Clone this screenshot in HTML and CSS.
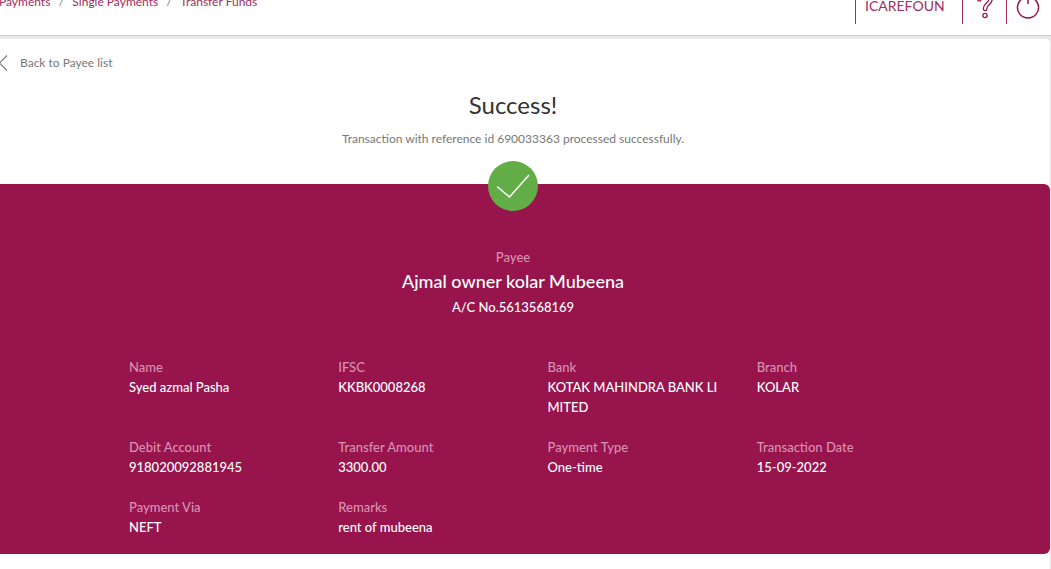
FILE: index.html
```html
<!DOCTYPE html>
<html lang="en">
<head>
<meta charset="utf-8">
<meta name="viewport" content="width=device-width, initial-scale=1">
<title>Transfer Funds</title>
<link rel="stylesheet" href="styles.css">
</head>
<body>
<header class="topbar">
  <nav class="crumbs" aria-label="Breadcrumb">
    <a href="#">Payments</a><span class="sep">/</span><a href="#">Single Payments</a><span class="sep">/</span><a href="#">Transfer Funds</a>
  </nav>
  <div class="tools">
    <a class="user" href="#">ICAREFOUN</a>
    <button class="tool" type="button" aria-label="Help">
      <svg width="18" height="30" viewBox="0 0 18 30" fill="none" stroke="currentColor" stroke-width="1.3"><path d="M1.600 9.400C1.600 4.800 4.600 2.500 9 2.500s7.300 2.800 7.300 6.500c0 5.600-5.500 5.600-5.500 9.500v.5a1.700 1.700 0 0 1-3.400 0v-.7C7.400 13.200 12.900 13 12.900 9c0-2.100-1.500-3.300-3.900-3.300S5.100 7 5 9.400a1.700 1.700 0 0 1-3.400 0z"/><circle cx="9" cy="25.500" r="2.100"/></svg>
    </button>
    <button class="tool" type="button" aria-label="Log out">
      <svg width="24" height="30" viewBox="0 0 24 30" fill="none" stroke="currentColor" stroke-width="1.500"><path d="M8 7.800a10.500 10.500 0 1 0 8 0M12 4v10"/></svg>
    </button>
  </div>
</header>
<main class="panel">
  <a class="back" href="#">
    <svg width="8" height="16" viewBox="0 0 8 16" fill="none" stroke="currentColor" stroke-width="1.200"><path d="M7 .5L-.5 8 7 15.500"/></svg>
    <span>Back to Payee list</span>
  </a>
  <section class="status">
    <h1>Success!</h1>
    <p>Transaction with reference id 690033363 processed successfully.</p>
  </section>
  <section class="receipt">
    <div class="badge">
      <svg width="50" height="50" viewBox="0 0 50 50" fill="none"><circle cx="25" cy="25" r="25" fill="#62ad47"/><path d="M9 25.500L21.500 36 41 14" stroke="#fff" stroke-width="1.600"/></svg>
    </div>
    <div class="payee">
      <p class="label">Payee</p>
      <h2>Ajmal owner kolar Mubeena</h2>
      <p>A/C No.5613568169</p>
    </div>
    <dl class="details">
      <div><dt>Name</dt><dd>Syed azmal Pasha</dd></div>
      <div><dt>IFSC</dt><dd>KKBK0008268</dd></div>
      <div><dt>Bank</dt><dd>KOTAK MAHINDRA BANK LI<br>MITED</dd></div>
      <div><dt>Branch</dt><dd>KOLAR</dd></div>
      <div><dt>Debit Account</dt><dd>918020092881945</dd></div>
      <div><dt>Transfer Amount</dt><dd>3300.00</dd></div>
      <div><dt>Payment Type</dt><dd>One-time</dd></div>
      <div><dt>Transaction Date</dt><dd>15-09-2022</dd></div>
      <div><dt>Payment Via</dt><dd>NEFT</dd></div>
      <div><dt>Remarks</dt><dd>rent of mubeena</dd></div>
    </dl>
  </section>
</main>
</body>
</html>
```
FILE: styles.css
```css
* {
  box-sizing: border-box;
}

html {
  height: 100%;
  overflow: hidden;
}

body {
  display: flex;
  flex-direction: column;
  min-height: 100%;
  margin: 0;
  background: #e8e8e8;
  color: #777;
  font-family: Lato, "Liberation Sans", sans-serif;
  font-size: 12px;
  line-height: 20px;
}

h1, h2, p, dl, dd {
  margin: 0;
}

a {
  color: inherit;
  text-decoration: none;
}

svg {
  display: block;
}

.topbar {
  display: flex;
  justify-content: space-between;
  margin-top: -20px;
  padding-bottom: 11px;
  background: #fff;
  border-bottom: 1px solid #ccc;
  color: #a32c60;
}

.crumbs {
  display: flex;
  margin-left: -1px;
  padding-top: 12px;
}

.sep {
  width: 22px;
  text-align: center;
  color: #777;
}

.tools {
  display: flex;
}

.user,
.tool {
  display: flex;
  height: 44px;
  border: 0;
  border-left: 1px solid #a32c60;
}

.user {
  width: 107px;
  padding: 16px 0 0 9px;
  font-size: 14px;
}

.tool {
  justify-content: center;
  width: 44px;
  padding: 10px 0 0;
  background: none;
  color: #97144d;
}

.tool:last-child {
  width: 45px;
  padding-right: 2px;
}

.panel {
  flex: 1;
  margin: 3px 1px 0 0;
  background: #fff;
  border-top-right-radius: 4px;
}

.back {
  display: flex;
  align-items: center;
  gap: 12px;
  padding-top: 14px;
}

.status {
  padding: 16px 24px 35px 0;
  text-align: center;
}

.status h1 {
  margin-bottom: 8px;
  color: #333;
  font-size: 24px;
  font-weight: 400;
  line-height: 32px;
}

.receipt {
  display: flow-root;
  padding-bottom: 17px;
  background: #97144d;
  border-radius: 0 6px 6px 0;
  color: #fff;
  font-size: 13px;
  font-weight: 500;
}

.badge {
  display: flex;
  justify-content: center;
  margin-top: -23px;
  padding-right: 24px;
}

.payee {
  padding: 36px 24px 40px 0;
  text-align: center;
}

.payee h2 {
  margin: 2px 0 4px;
  font-size: 18px;
  font-weight: 500;
  line-height: 24px;
}

.label,
.details dt {
  color: #d991b2;
}

.details {
  display: grid;
  grid-template-columns: repeat(4, 1fr);
  row-gap: 20px;
  padding: 0 84px 0 129px;
}
```
